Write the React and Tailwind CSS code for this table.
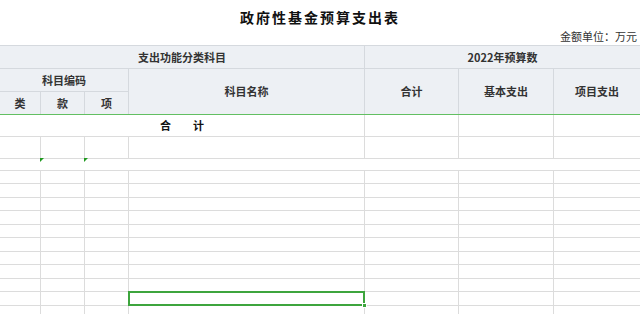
import React from "react";

const COLS = "grid-cols-[40px_43px_43px_235px_93px_94px_86px]";
const bodyRows = [12, 13, 12, 13, 12, 13, 12, 13, 12, 13, 12];

function Triangle() {
  return (
    <span className="absolute -left-px -top-px w-0 h-0 border-t-[4px] border-t-[#1f9a1f] border-r-[4px] border-r-transparent" />
  );
}

function App() {
  return (
    <div
      className="w-[640px] h-[314px] overflow-hidden bg-white text-[#222]"
      style={{ fontFamily: '"Noto Sans CJK SC", "Noto Sans", sans-serif' }}
    >
      <div className="h-[28px] pt-[8px] text-center text-[14px] leading-[18px] font-bold tracking-[2px] text-[#111]">
        政府性基金预算支出表
      </div>
      <div className="h-[17px] pr-[3px] text-right text-[11px] leading-[17px] text-[#333]">金额单位：万元</div>

      {/* header */}
      <div
        className={`grid ${COLS} grid-rows-[22px_22px_22px] gap-px bg-[#d5d9de] border-t border-t-[#d5d9de] border-b border-b-[#62bf62] text-[11px] font-bold text-[#333]`}
      >
        <div className="col-span-4 bg-[#edf0f4] flex items-center justify-center">支出功能分类科目</div>
        <div className="col-span-3 bg-[#edf0f4] flex items-center justify-center">2022年预算数</div>
        <div className="col-span-3 bg-[#edf0f4] flex items-center justify-center">科目编码</div>
        <div className="row-span-2 bg-[#edf0f4] flex items-center justify-center">科目名称</div>
        <div className="row-span-2 bg-[#edf0f4] flex items-center justify-center">合计</div>
        <div className="row-span-2 bg-[#edf0f4] flex items-center justify-center">基本支出</div>
        <div className="row-span-2 bg-[#edf0f4] flex items-center justify-center">项目支出</div>
        <div className="bg-[#edf0f4] flex items-center justify-center">类</div>
        <div className="bg-[#edf0f4] flex items-center justify-center">款</div>
        <div className="bg-[#edf0f4] flex items-center justify-center">项</div>
      </div>

      {/* body */}
      <div className={`grid ${COLS} gap-px bg-[#dcdcdc] text-[11px]`}>
        <div className="col-span-4 h-[21px] bg-white flex items-center justify-center font-bold text-[#111]">
          合　　计
        </div>
        <div className="h-[21px] bg-white" />
        <div className="h-[21px] bg-white" />
        <div className="h-[21px] bg-white" />

        {[0, 1, 2, 3, 4, 5, 6].map((c) => (
          <div key={"b" + c} className="h-[21px] bg-white" />
        ))}

        <div className={`col-span-7 h-[11px] bg-white grid ${COLS} gap-px`}>
          <div />
          <div className="relative">
            <Triangle />
          </div>
          <div className="relative">
            <Triangle />
          </div>
        </div>

        {bodyRows.map((h, r) =>
          [0, 1, 2, 3, 4, 5, 6].map((c) => (
            <div
              key={r + "-" + c}
              className={`${h === 12 ? "h-[12px]" : "h-[13px]"} bg-white relative`}
            >
              {r === 9 && c === 3 && (
                <>
                  <div className="absolute z-10 -inset-px border-2 border-[#3da53d]" />
                  <div className="absolute z-10 -right-[3px] -bottom-[3px] w-[5px] h-[5px] bg-[#3da53d] border border-white" />
                </>
              )}
            </div>
          ))
        )}
      </div>
    </div>
  );
}

export default App;
